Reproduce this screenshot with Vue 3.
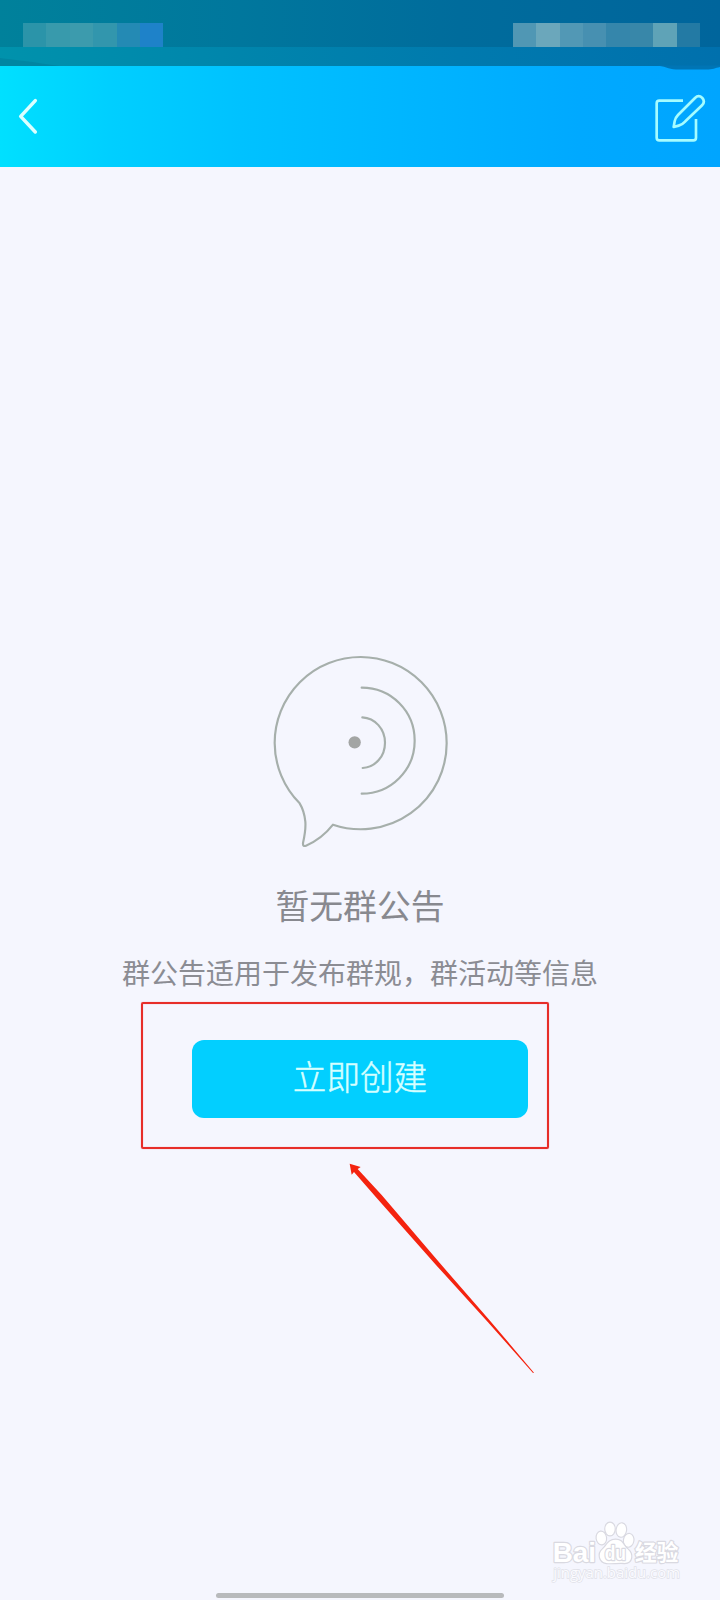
<script setup>
const leftBlocks = ['#2b94a9', '#389aac', '#3c9bad', '#3296ad', '#248ab4', '#1e82c9']
const rightBlocks = ['#5097b4', '#6ba7bb', '#5298b5', '#4790b1', '#3586ab', '#3887a9', '#5fa3b7', '#237aa4']
</script>

<template>
  <div class="screen">
    <header class="top">
      <div class="status">
        <div class="blocks">
          <i v-for="(c, n) in leftBlocks" :key="n" :style="{ background: c }"></i>
        </div>
        <div class="blocks">
          <i v-for="(c, n) in rightBlocks" :key="n" :style="{ background: c }"></i>
        </div>
        <svg class="edge" viewBox="0 0 720 24" width="720" height="24">
          <path d="M0 11 C14 13 28 14 45 17 L60 19 L0 19Z" fill="#007f9b" opacity=".6" />
          <path d="M655 18.5 C665 19 668 22 676 22.5 H706 C713 22.5 715 21 720 20 V18.5Z" fill="#0075b5" />
        </svg>
      </div>
      <nav class="bar">
        <svg class="back" viewBox="0 0 20 38" width="20" height="38">
          <path d="M17.3 2.6 L2.7 18.4 L17.3 34" fill="none" stroke="#dcffff" stroke-width="3.5" stroke-linecap="round" stroke-linejoin="round" />
        </svg>
        <svg class="edit" viewBox="525 280 153 146" width="51" height="48.67">
          <g fill="none" stroke="#a5fcff" stroke-width="8" stroke-linejoin="round">
            <path d="M609 300 H538 Q530 300 530 308 V411 Q530 419 538 419 H640 Q648 419 648 411 V355" />
            <path d="M581 379 L584 362 Q586 351 594 343 L645 292 Q656 281 667 292 Q676 302 667 313 L616 362 Q607 372 596 375 Z" />
          </g>
        </svg>
      </nav>
    </header>

    <main class="empty">
      <svg class="bubble" viewBox="0 0 600 660" width="200" height="220">
        <g fill="none" stroke="#a6afab" stroke-width="6.5" stroke-linecap="round" stroke-linejoin="round">
          <path d="M119 490 A259 259 0 0 1 44 309 A258 258 0 0 1 302 51 A258.500 258.500 0 0 1 560 310 A258 258 0 0 1 219 554 Q184 598 138 617 Q128 621 129 609 Q138 568 136 545 Q133 513 119 490Z" />
          <path d="M305 143 C393 143 464 213 464 302 C464 390 393 461 305 461" />
          <path d="M307 232 C345 234 375 267 375 308 C375 349 347 381 308 384" />
        </g>
        <circle cx="284" cy="307" r="18.5" fill="#a3a5a4" />
      </svg>
      <h1>暂无群公告</h1>
      <p>群公告适用于发布群规，群活动等信息</p>
      <button type="button">立即创建</button>
    </main>

    <div class="highlight"></div>
    <svg class="arrow" viewBox="0 0 660 750" width="220" height="250">
      <path d="M59 71 L92 81 L83 87 L155 165 L330 370 L480 542 L612 698 L609 699 L474 547 L320 377 L142 176 L72 96 L65 104Z" fill="#f4230f" />
    </svg>

    <svg class="watermark" viewBox="0 0 570 300" width="190" height="100">
      <g fill="#fff" stroke="#d9d9e1" stroke-width="7" paint-order="stroke" stroke-linejoin="round">
        <text x="68" y="187" class="latin" font-size="83" textLength="130" lengthAdjust="spacingAndGlyphs">Bai</text>
        <ellipse cx="214" cy="114" rx="14" ry="19" transform="rotate(-8 214 114)" />
        <ellipse cx="240" cy="87" rx="14" ry="19" />
        <ellipse cx="274" cy="90" rx="14" ry="20" transform="rotate(8 274 90)" />
        <ellipse cx="296" cy="121" rx="14" ry="19" transform="rotate(10 296 121)" />
        <path d="M257 119 C234 119 232 136 218 148 C203 160 208 187 229 189 C246 191 266 187 284 189 C307 189 310 162 293 148 C279 137 279 119 257 119Z" />
        <text x="224" y="180" class="latin" font-size="58" textLength="64" lengthAdjust="spacingAndGlyphs">du</text>
        <text x="315" y="181" class="han" font-size="65">经验</text>
      </g>
      <text x="70" y="235" class="url" font-size="43" textLength="380" lengthAdjust="spacingAndGlyphs">jingyan.baidu.com</text>
    </svg>
    <div class="home"></div>
  </div>
</template>

<style>
body {
  margin: 0;
}
</style>

<style scoped>
.screen {
  position: relative;
  width: 720px;
  height: 1600px;
  overflow: hidden;
  background: #f5f6fe;
  font-family: "Noto Sans CJK SC", sans-serif;
}
.top {
  height: 167px;
  background: linear-gradient(90deg, #00e0ff 0, #00cfff 110px, #00c2ff 240px, #00b6ff 400px, #00a9ff 580px, #00a5ff 720px);
}
.status {
  position: relative;
  box-sizing: border-box;
  height: 66px;
  padding: 23px 20px 0 23px;
  display: flex;
  justify-content: space-between;
  background:
    linear-gradient(90deg, #0092ac, #0085ac 240px, #007aae 460px, #0070ad) 0 47px / 720px 19px no-repeat,
    linear-gradient(90deg, #00819b, #00779d 240px, #006c9c 460px, #00659c);
}
.blocks {
  display: flex;
  height: 24px;
}
.blocks i {
  width: 23.4px;
}
.edge {
  position: absolute;
  left: 0;
  top: 47px;
}
.bar {
  display: flex;
  justify-content: space-between;
  align-items: flex-start;
  padding: 28px 14px 0 18px;
}
.back {
  margin-top: 4px;
}
.empty {
  display: flex;
  flex-direction: column;
  align-items: center;
  padding-top: 473px;
}
.bubble {
  display: block;
}
h1 {
  margin: 20px 0 0;
  font-size: 33.8px;
  line-height: 50px;
  font-weight: 400;
  color: #88898f;
}
p {
  margin: 21px 0 0;
  font-size: 28px;
  line-height: 42px;
  color: #8b8c93;
}
button {
  margin-top: 47px;
  width: 336px;
  height: 78px;
  border: 0;
  border-radius: 12px;
  padding: 0 0 8px;
  background: #02cfff;
  color: #d5ffff;
  font-family: inherit;
  font-size: 33.6px;
  font-weight: 300;
  -webkit-text-stroke: 0.5px #d5ffff;
}
.highlight {
  position: absolute;
  left: 141px;
  top: 1002px;
  width: 404px;
  height: 143px;
  border: 2px solid #e72e29;
  border-radius: 2px;
  box-shadow: 0 0 1px #e72e2999, inset 0 0 1px #e72e2999;
}
.arrow {
  position: absolute;
  left: 330px;
  top: 1140px;
}
.watermark {
  position: absolute;
  left: 530px;
  top: 1500px;
}
.latin {
  font-family: "Liberation Sans", sans-serif;
  font-weight: 700;
}
.han {
  font-weight: 700;
}
.url {
  font-family: "Open Sans", sans-serif;
  fill: #fbfbff;
  stroke: #e0e1e8;
  stroke-width: 4px;
  paint-order: stroke;
}
.home {
  position: absolute;
  left: 216px;
  top: 1593px;
  width: 288px;
  height: 5px;
  border-radius: 3px;
  background: #b8babc;
}
</style>
